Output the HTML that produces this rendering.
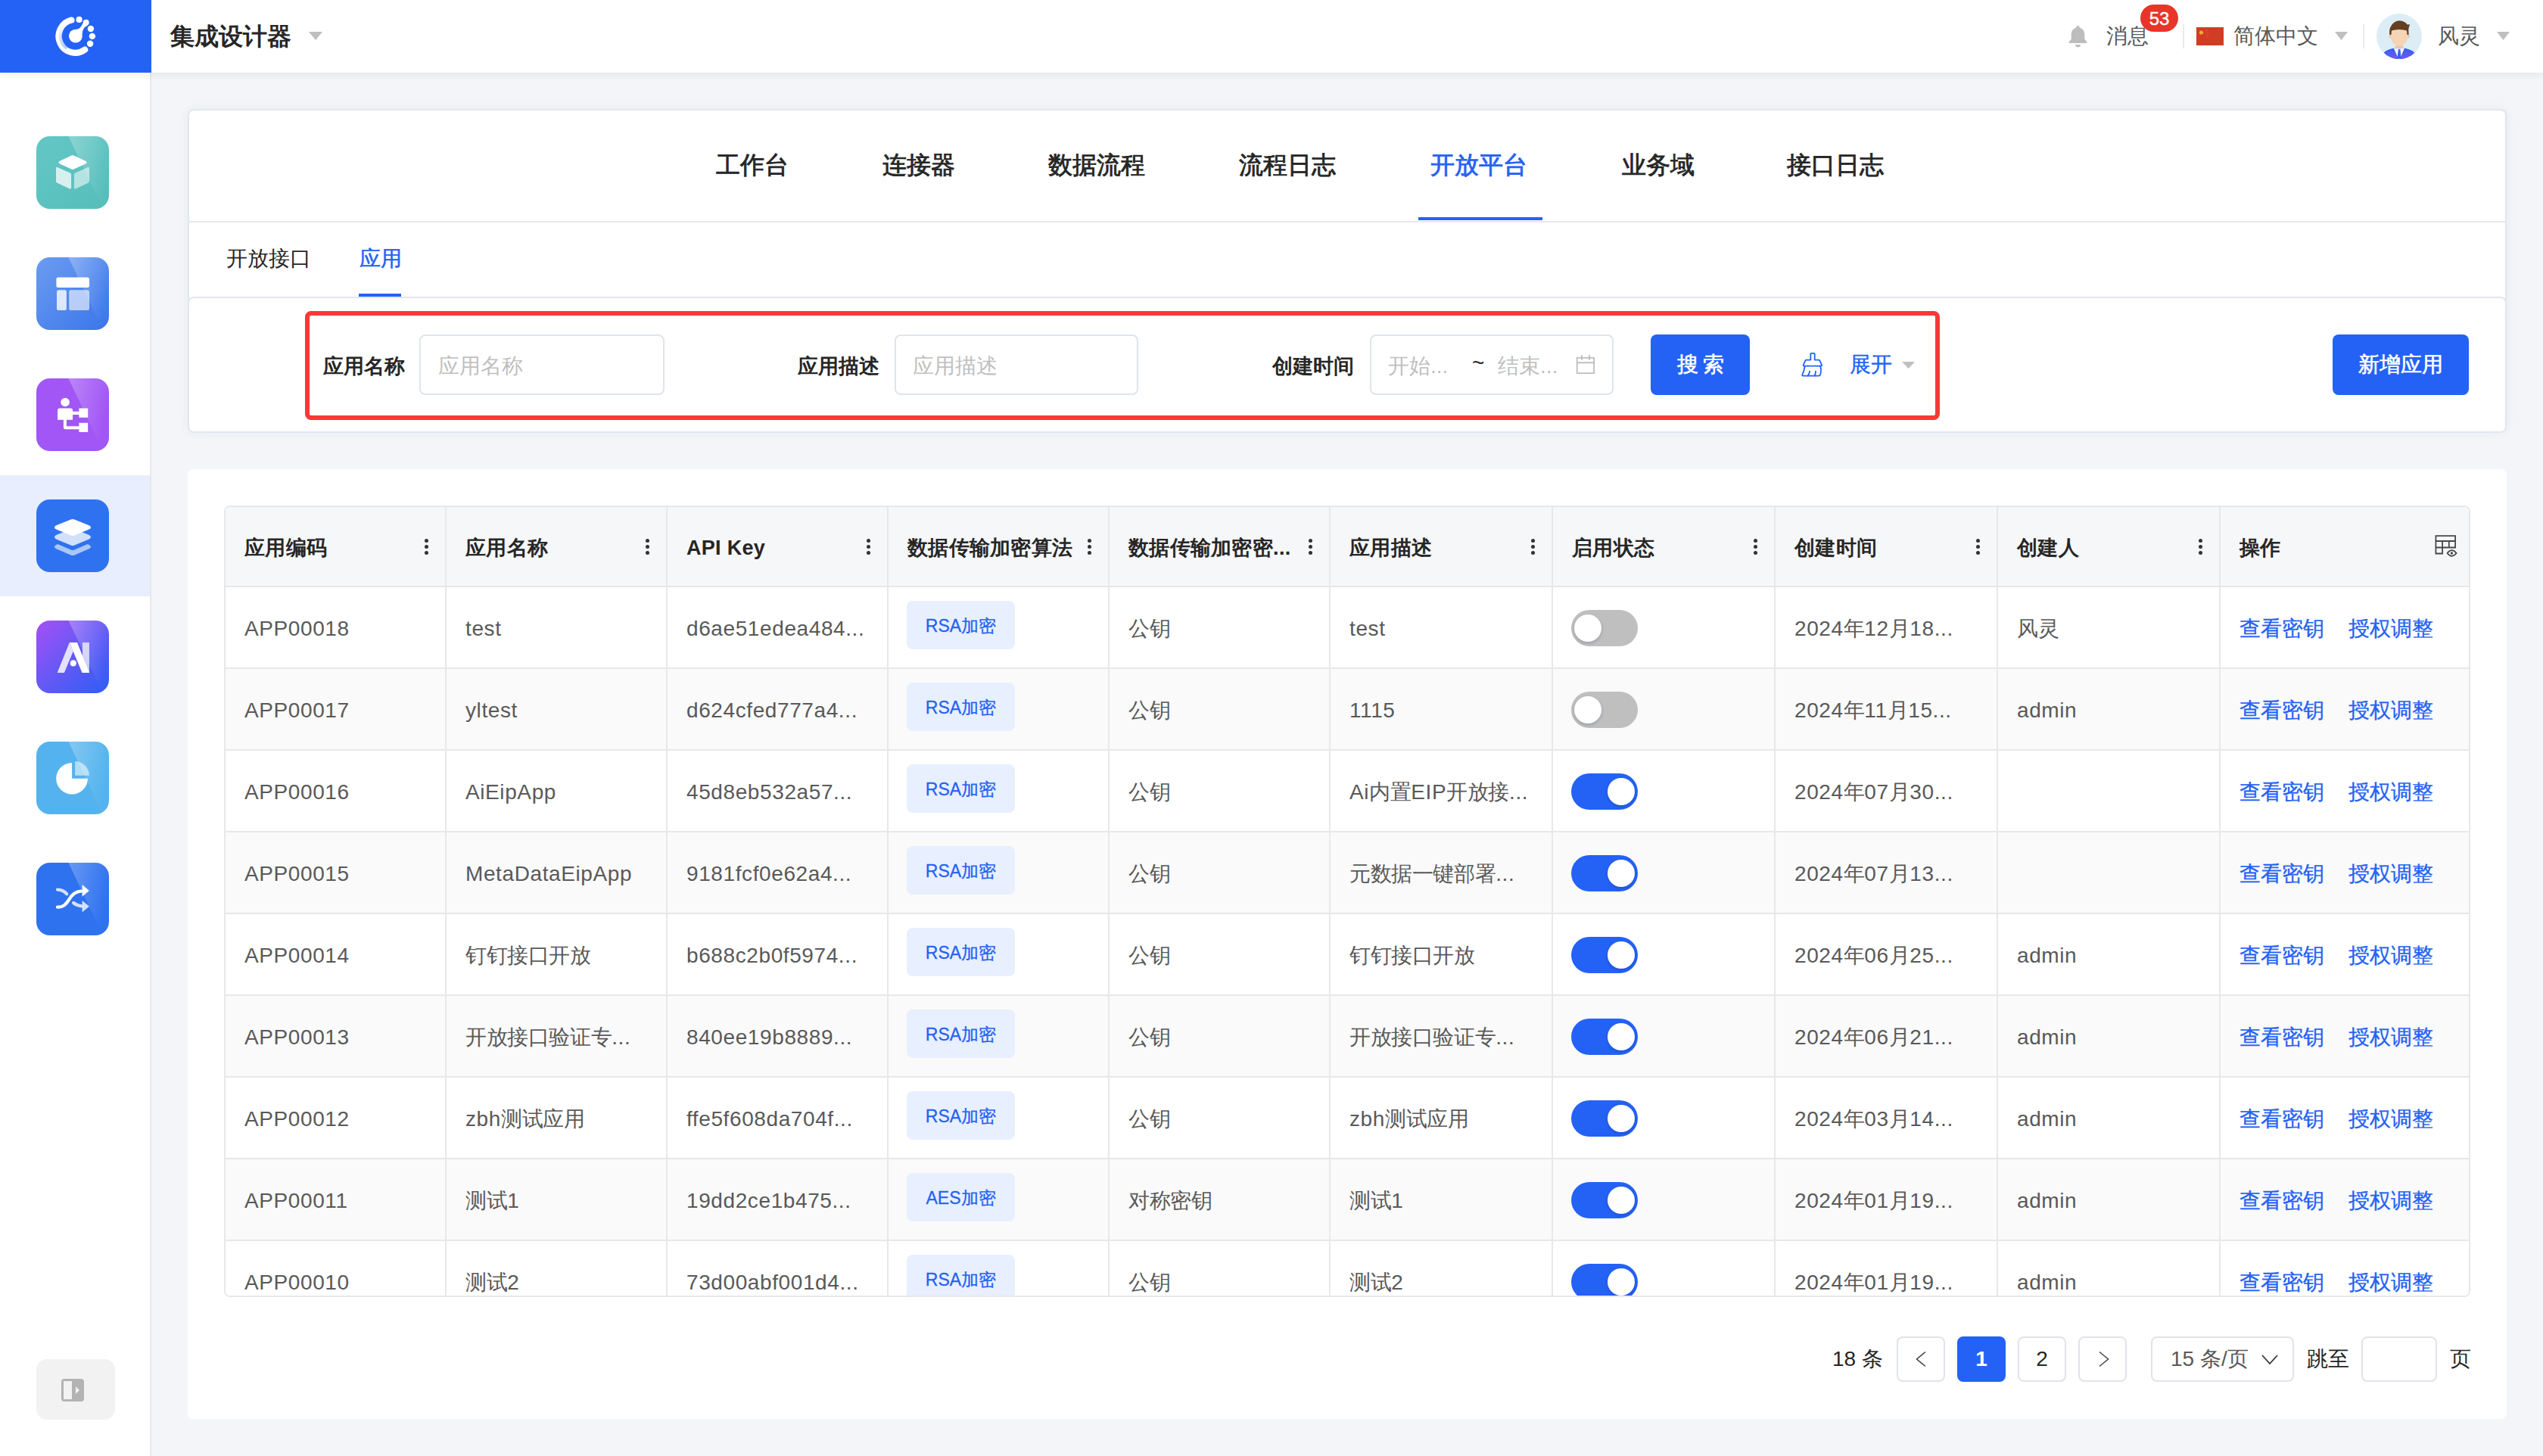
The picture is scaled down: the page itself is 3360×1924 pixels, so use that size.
<!DOCTYPE html>
<html><head><meta charset="utf-8">
<style>
*{box-sizing:border-box;margin:0;padding:0}
html,body{width:3360px;height:1924px;overflow:hidden}
body{position:relative;background:#F3F5F8;font-family:"Liberation Sans",sans-serif;color:#262626}
.a{position:absolute}
.t{position:absolute;white-space:nowrap;line-height:1}
#hdr{left:0;top:0;width:3360px;height:96px;background:#fff;box-shadow:0 3px 10px rgba(20,30,60,.07);z-index:5}
#side{left:0;top:96px;width:200px;height:1828px;background:#fff;border-right:2px solid #E6E8EC;z-index:4}
.sic{position:absolute;left:48px;width:96px;height:96px;border-radius:18px;overflow:hidden}
.card{position:absolute;background:#fff;border-radius:8px}
.tab{position:absolute;top:202px;font-size:32px;font-weight:400;-webkit-text-stroke:0.85px currentColor;color:#262626;line-height:32px;white-space:nowrap}
.lbl{position:absolute;top:470px;font-size:27px;font-weight:700;color:#262626;line-height:28px;white-space:nowrap}
.inp{position:absolute;top:442px;height:80px;border:2px solid #E0E4EC;border-radius:8px;background:#fff}
.ph{position:absolute;font-size:28px;color:#BFBFBF;line-height:28px;white-space:nowrap}
.btn{position:absolute;background:#2462F6;border-radius:8px;color:#fff;font-size:28px;line-height:28px;text-align:center}
.hc{position:absolute;top:0;height:106px}
.th{position:absolute;top:41px;font-size:27px;font-weight:700;color:#262626;line-height:27px;white-space:nowrap;letter-spacing:0.3px}
.td{position:absolute;font-size:28px;color:#595959;line-height:28px;white-space:nowrap;letter-spacing:0.6px}
.dots{position:absolute;width:6px;height:22px}
.dots i{position:absolute;left:0;width:5px;height:5px;border-radius:50%;background:#333}
.tag{position:absolute;width:143px;height:64px;border-radius:8px;background:#E8EFFE;color:#2462F6;font-size:23px;line-height:66px;-webkit-text-stroke:0.3px #2462F6;text-align:center;white-space:nowrap}
.sw{position:absolute;width:88px;height:48px;border-radius:24px}
.sw i{position:absolute;top:6px;width:36px;height:36px;border-radius:50%;background:#fff;box-shadow:0 2px 4px rgba(0,30,80,.2)}
.pg{position:absolute;top:1766px;height:60px;border:2px solid #E1E3EA;border-radius:8px;background:#fff;font-size:28px;line-height:56px;text-align:center;color:#262626}
</style></head>
<body>

<div id="hdr" class="a">
<div class="a" style="left:0;top:0;width:200px;height:96px;background:#2462F6"></div>
<svg class="a" style="left:60px;top:10px" width="80" height="80" viewBox="60 10 80 80">
<defs><linearGradient id="lg1" gradientUnits="userSpaceOnUse" x1="0" y1="30" x2="0" y2="64"><stop offset="0" stop-color="#A9C3F7" stop-opacity="0"/><stop offset="1" stop-color="#A9C3F7" stop-opacity=".9"/></linearGradient></defs>
<path d="M94.4 26.6 A21.9 21.9 0 1 0 112.2 65.7" fill="none" stroke="#fff" stroke-width="8.2" stroke-linecap="round"/>
<path d="M88.6 31.6 A19.6 19.6 0 0 0 88.5 64" fill="none" stroke="url(#lg1)" stroke-width="3.8"/>
<circle cx="99.9" cy="47.6" r="8.9" fill="#fff"/>
<path d="M100.5 38.7 Q106.5 38.5 109.6 30.2 L116 33.6 Q108.5 37 108.6 45.5 Z" fill="#fff"/>
<circle cx="113.7" cy="29.8" r="4" fill="#fff"/>
<circle cx="104.6" cy="25.9" r="4.1" fill="#fff"/>
<circle cx="119.9" cy="38" r="4.2" fill="#fff"/>
<circle cx="121.9" cy="47.9" r="4.2" fill="#fff"/>
<circle cx="119.1" cy="57.8" r="4.2" fill="#fff"/>
</svg>
<div class="t" style="left:225px;top:32px;font-size:32px;font-weight:600;color:#262626">集成设计器</div>
<svg class="a" style="left:408px;top:42px" width="18" height="11" viewBox="0 0 18 11"><path d="M0 0H18L9 11Z" fill="#BFBFBF"/></svg>
<svg class="a" style="left:2733px;top:33px" width="25" height="30" viewBox="0 0 25 30"><path d="M12.5 1c1.3 0 2 .8 2 1.8v.6c4.3 1 6.8 4.6 6.8 9.2v6.2l3 3.4v1.8H.7v-1.8l3-3.4v-6.2c0-4.6 2.5-8.2 6.8-9.2v-.6c0-1 .7-1.8 2-1.8z" fill="#BDBDBD"/><path d="M9 26h7c0 2-1.5 3.5-3.5 3.5S9 28 9 26z" fill="#BDBDBD"/></svg>
<div class="t" style="left:2783px;top:34px;font-size:28px;color:#595959">消息</div>
<div class="a" style="left:2828px;top:6px;width:50px;height:36px;border-radius:18px;background:#E8352A;color:#fff;font-size:24px;line-height:38px;text-align:center;-webkit-text-stroke:0.4px #fff">53</div>
<div class="a" style="left:2884px;top:32px;width:2px;height:32px;background:#EBEBEB"></div>
<svg class="a" style="left:2902px;top:36px" width="36" height="24" viewBox="0 0 36 24"><rect width="36" height="24" fill="#D23C25"/><circle cx="6.5" cy="7" r="2.6" fill="#F2BE3A" opacity=".85"/><path d="M13 3.5 Q17 8 13.5 13.5" stroke="#DD7A30" stroke-width="1.4" fill="none" stroke-dasharray="1.6 1.6" opacity=".6"/></svg>
<div class="t" style="left:2951px;top:34px;font-size:28px;color:#595959">简体中文</div>
<svg class="a" style="left:3085px;top:42px" width="17" height="11" viewBox="0 0 17 11"><path d="M0 0H17L8.5 11Z" fill="#BFBFBF"/></svg>
<div class="a" style="left:3122px;top:32px;width:2px;height:32px;background:#EBEBEB"></div>
<svg class="a" style="left:3140px;top:18px" width="60" height="60" viewBox="0 0 60 60">
<defs><clipPath id="avc"><circle cx="30" cy="30" r="30"/></clipPath>
<linearGradient id="suit" x1="0" y1="0" x2="0" y2="1"><stop offset="0" stop-color="#2E60F2"/><stop offset="1" stop-color="#7A55F2"/></linearGradient></defs>
<circle cx="30" cy="30" r="30" fill="#DDEDF6"/>
<g clip-path="url(#avc)">
<rect x="25" y="39" width="10" height="7" fill="#F0CBA8"/>
<path d="M9.8 51.5 Q14 47.5 22.4 45.8 L37.2 45.8 Q46 47.5 50.2 51.5 Q44 62 30 62 Q16 62 9.8 51.5 Z" fill="url(#suit)"/>
<path d="M22.6 45.8 L37.2 45.8 L31.2 59.5 L28.8 59.5 Z" fill="#F2F2F2"/>
<path d="M22.4 45.8 L29 60 L22 60 L15 50 Z" fill="url(#suit)"/>
<path d="M37.2 45.8 L31 60 L38 60 L45 50 Z" fill="url(#suit)"/>
<path d="M28.9 47.3 L31.3 47.3 L32.8 59.5 L27.4 59.5 Z" fill="#2F62F2"/>
<circle cx="30.1" cy="48" r="1.2" fill="#7B55F2"/>
<ellipse cx="17.9" cy="29.8" rx="1.9" ry="2.6" fill="#F2CDAA"/><ellipse cx="42.4" cy="29.8" rx="1.9" ry="2.6" fill="#F2CDAA"/>
<path d="M18.4 24 Q18.4 20.5 22 20.5 L38 20.5 Q41.6 20.5 41.4 24 L40.8 33 Q40 38 34.5 42.3 L25.5 42.3 Q20 38 19.1 33 Z" fill="#F5D5B5"/>
<path d="M17.3 28 Q16.5 20 19 17 Q23 9.3 30.5 9.3 Q37 9.5 40.8 14.6 L44.2 14.3 Q42.8 17.5 42.3 20.5 L42.6 28 L40.5 28 L40 22.5 Q36 21 30 21 Q24 21 20 22.5 L19.5 28 Z" fill="#653F22"/>
</g></svg>
<div class="t" style="left:3221px;top:34px;font-size:28px;color:#595959">风灵</div>
<svg class="a" style="left:3299px;top:42px" width="17" height="11" viewBox="0 0 17 11"><path d="M0 0H17L8.5 11Z" fill="#BFBFBF"/></svg>
</div>
<div id="side" class="a">
<div class="a" style="left:0;top:532px;width:198px;height:160px;background:#E8EEFD"></div>
<div class="sic" style="top:84px;background:linear-gradient(135deg,#62C7C5,#57BDBB)"><svg class="a" style="left:0;top:0" width="96" height="96" viewBox="0 0 96 96"><defs><linearGradient id="shg0" x1="0" y1="0" x2="1" y2="0.35"><stop offset="0" stop-color="#fff" stop-opacity=".28"/><stop offset="1" stop-color="#fff" stop-opacity="0"/></linearGradient></defs><path d="M42.5 0 L96 0 L96 96 L88 96 Z" fill="url(#shg0)"/><path d="M46.3 25.6 Q48 24.8 49.7 25.6 L65.5 33 Q67.6 34.6 65.5 36.2 L49.7 43.6 Q48 44.4 46.3 43.6 L30.5 36.2 Q28.4 34.6 30.5 33 Z" fill="#fff"/><path d="M27.8 41 L44.6 48.6 Q46.1 49.3 46.1 51 V67.9 Q46.1 70.2 44 69.4 L27.6 61.8 Q26 61 26 59.3 V42.6 Q26 40.2 27.8 41 Z" fill="#fff" fill-opacity=".75"/><path d="M68.2 41 L51.4 48.6 Q49.9 49.3 49.9 51 V67.9 Q49.9 70.2 52 69.4 L68.4 61.8 Q70 61 70 59.3 V42.6 Q70 40.2 68.2 41 Z" fill="#fff" fill-opacity=".55"/></svg></div>
<div class="sic" style="top:244px;background:linear-gradient(135deg,#6C9CF1,#3A76EA)"><svg class="a" style="left:0;top:0" width="96" height="96" viewBox="0 0 96 96"><defs><linearGradient id="shg1" x1="0" y1="0" x2="1" y2="0.35"><stop offset="0" stop-color="#fff" stop-opacity=".28"/><stop offset="1" stop-color="#fff" stop-opacity="0"/></linearGradient></defs><path d="M42.5 0 L96 0 L96 96 L88 96 Z" fill="url(#shg1)"/><rect x="26.4" y="26.4" width="43.6" height="13.5" rx="2.5" fill="#fff"/><rect x="27" y="43.2" width="12.9" height="26.8" rx="2.5" fill="#fff" fill-opacity=".8"/><rect x="43.2" y="43.2" width="26.8" height="26.8" rx="2.5" fill="#fff" fill-opacity=".6"/></svg></div>
<div class="sic" style="top:404px;background:#A156F5"><svg class="a" style="left:0;top:0" width="96" height="96" viewBox="0 0 96 96"><defs><linearGradient id="shg2" x1="0" y1="0" x2="1" y2="0.35"><stop offset="0" stop-color="#fff" stop-opacity=".28"/><stop offset="1" stop-color="#fff" stop-opacity="0"/></linearGradient></defs><path d="M42.5 0 L96 0 L96 96 L88 96 Z" fill="url(#shg2)"/><circle cx="38.1" cy="31.5" r="5.8" fill="#fff"/><path d="M31 39.6 H45.1 Q48.1 39.6 48.1 42.6 V43.8 H56.4 V39.6 H68.2 V51.7 H56.4 V48.1 H48.1 V54.7 H39.9 V63.3 H56.4 V58.7 H68.2 V70.9 H56.4 V67.2 H38.4 Q35.9 67.2 35.9 64.7 V54.7 H28 V42.6 Q28 39.6 31 39.6 Z" fill="#fff"/></svg></div>
<div class="sic" style="top:564px;background:#2F72F0"><svg class="a" style="left:0;top:0" width="96" height="96" viewBox="0 0 96 96"><path d="M48 74 Q46.8 74 45.6 73.5 L26.3 65.3 Q24 64.2 24 62.6 Q24 61 26.3 59.9 L28.3 59 L45.6 66.4 Q48 67.4 50.4 66.4 L67.7 59 L69.7 59.9 Q72 61 72 62.6 Q72 64.2 69.7 65.3 L50.4 73.5 Q49.2 74 48 74 Z" fill="#fff" fill-opacity=".6"/><path d="M26.3 47.1 L45.6 39 Q48 38 50.4 39 L69.7 47.1 Q72 48.2 72 49.8 Q72 51.4 69.7 52.5 L50.4 60.6 Q48 61.6 45.6 60.6 L26.3 52.5 Q24 51.4 24 49.8 Q24 48.2 26.3 47.1 Z" fill="#fff" fill-opacity=".78"/><path d="M26.3 34.3 L45.6 26.4 Q48 25.4 50.4 26.4 L69.7 34.3 Q72 35.4 72 36.9 Q72 38.4 69.7 39.5 L50.4 47.4 Q48 48.4 45.6 47.4 L26.3 39.5 Q24 38.4 24 36.9 Q24 35.4 26.3 34.3 Z" fill="#fff"/></svg></div>
<div class="sic" style="top:724px;background:linear-gradient(135deg,#A64FF6 0%,#6A58F5 45%,#2E5DF4 100%)"><svg class="a" style="left:0;top:0" width="96" height="96" viewBox="0 0 96 96"><defs><linearGradient id="shg4" x1="0" y1="0" x2="1" y2="0.35"><stop offset="0" stop-color="#fff" stop-opacity=".28"/><stop offset="1" stop-color="#fff" stop-opacity="0"/></linearGradient></defs><path d="M42.5 0 L96 0 L96 96 L88 96 Z" fill="url(#shg4)"/><path d="M27.7 68.9 L43.8 29 L48.7 40.8 L36.9 68.9 Z" fill="#fff" fill-opacity=".82"/><rect x="61" y="29" width="8.9" height="39.9" fill="#fff" fill-opacity=".72"/><path d="M43.8 29 L54 29 L70 68.9 L60.5 68.9 Z" fill="#fff"/><circle cx="48.8" cy="56.4" r="4.1" fill="#fff"/></svg></div>
<div class="sic" style="top:884px;background:#54B3EE"><svg class="a" style="left:0;top:0" width="96" height="96" viewBox="0 0 96 96"><defs><linearGradient id="shg5" x1="0" y1="0" x2="1" y2="0.35"><stop offset="0" stop-color="#fff" stop-opacity=".28"/><stop offset="1" stop-color="#fff" stop-opacity="0"/></linearGradient></defs><path d="M42.5 0 L96 0 L96 96 L88 96 Z" fill="url(#shg5)"/><path d="M47.1 27.9 A20.9 20.9 0 1 0 68 48.8 H47.1 Z" fill="#fff"/><path d="M51.1 26 A18.8 18.8 0 0 1 69.9 44.8 H51.1 Z" fill="#fff" fill-opacity=".55"/></svg></div>
<div class="sic" style="top:1044px;background:#2F72F0"><svg class="a" style="left:0;top:0" width="96" height="96" viewBox="0 0 96 96"><defs><linearGradient id="shg6" x1="0" y1="0" x2="1" y2="0.35"><stop offset="0" stop-color="#fff" stop-opacity=".28"/><stop offset="1" stop-color="#fff" stop-opacity="0"/></linearGradient></defs><path d="M42.5 0 L96 0 L96 96 L88 96 Z" fill="url(#shg6)"/><path d="M28 35.6 Q35 35.6 40.2 41.3" stroke="#fff" stroke-opacity=".78" stroke-width="4.3" fill="none" stroke-linecap="round"/><path d="M28 58.7 C36 58.7 39 55 43 49 C47 42 52 38 59 37.6" stroke="#fff" stroke-width="4.3" fill="none" stroke-linecap="round"/><path d="M60.6 29 L69.9 36.9 L60.6 44.8 Z" fill="#fff"/><path d="M49.1 53 Q53 56.3 59.5 57.3" stroke="#fff" stroke-opacity=".78" stroke-width="4.3" fill="none" stroke-linecap="round"/><path d="M60.6 50 L69.9 57.7 L60.6 65.6 Z" fill="#fff" fill-opacity=".78"/></svg></div>
<div class="a" style="left:48px;top:1700px;width:104px;height:80px;border-radius:14px;background:#F2F2F2"></div>
<svg class="a" style="left:80px;top:1725px" width="32" height="32" viewBox="0 0 32 32"><rect x="1" y="1" width="30" height="30" rx="4" fill="#B3B3B3"/><rect x="4" y="4" width="11" height="24" fill="#F2F2F2"/><path d="M20 11 L25 16 L20 21 Z" fill="#F2F2F2"/></svg>
</div>
<div class="card" style="left:248px;top:144px;width:3064px;height:428px;border:2px solid #E2E6ED;box-shadow:0 0 14px rgba(30,50,90,.05)"></div>
<div class="tab" style="left:946px;color:#262626">工作台</div>
<div class="tab" style="left:1166px;color:#262626">连接器</div>
<div class="tab" style="left:1385px;color:#262626">数据流程</div>
<div class="tab" style="left:1637px;color:#262626">流程日志</div>
<div class="tab" style="left:1890px;color:#2462F6">开放平台</div>
<div class="tab" style="left:2143px;color:#262626">业务域</div>
<div class="tab" style="left:2361px;color:#262626">接口日志</div>
<div class="a" style="left:1874px;top:287px;width:164px;height:4px;background:#2462F6"></div>
<div class="a" style="left:248px;top:292px;width:3063px;height:2px;background:#E6E8EE"></div>
<div class="t" style="left:299px;top:328px;font-size:28px;color:#262626">开放接口</div>
<div class="t" style="left:475px;top:328px;font-size:28px;-webkit-text-stroke:0.5px #2462F6;color:#2462F6">应用</div>
<div class="a" style="left:474px;top:388px;width:56px;height:4px;background:#2462F6"></div>
<div class="a" style="left:248px;top:392px;width:3064px;height:24px;border-top:2px solid #E3E6EE;border-left:2px solid #E3E6EE;border-right:2px solid #E3E6EE;border-radius:8px 8px 0 0;-webkit-mask-image:linear-gradient(#000 30%,transparent 100%)"></div>
<div class="a" style="left:403px;top:411px;width:2160px;height:144px;border:6px solid #F93838;border-radius:8px"></div>
<div class="lbl" style="left:427px">应用名称</div>
<div class="inp" style="left:554px;width:324px"></div><div class="ph" style="left:579px;top:470px">应用名称</div>
<div class="lbl" style="left:1054px">应用描述</div>
<div class="inp" style="left:1182px;width:322px"></div><div class="ph" style="left:1206px;top:470px">应用描述</div>
<div class="lbl" style="left:1681px">创建时间</div>
<div class="inp" style="left:1810px;width:322px"></div>
<div class="ph" style="left:1834px;top:470px">开始...</div>
<div class="t" style="left:1945px;top:466px;font-size:28px;color:#262626">~</div>
<div class="ph" style="left:1979px;top:470px">结束...</div>
<svg class="a" style="left:2070px;top:460px" width="50" height="45" viewBox="0 0 50 45"><path d="M13.7 12.9H36.1V33.1H13.7Z M13.7 19.2H36.1 M20 9.3V15.8 M30 9.3V15.8" fill="none" stroke="#BFBFBF" stroke-width="1.9"/></svg>
<div class="btn" style="left:2181px;top:442px;width:131px;height:80px;line-height:80px;-webkit-text-stroke:0.6px #fff;letter-spacing:6px;padding-left:6px">搜索</div>
<svg class="a" style="left:2370px;top:455px" width="50" height="50" viewBox="0 0 50 50"><g fill="none" stroke="#2462F6" stroke-width="1.8" stroke-linejoin="round" stroke-linecap="round"><path d="M22.3 20.6V12.6Q22.3 11.9 23 11.9H27Q27.7 11.9 27.7 12.6V20.6H33Q33.9 20.6 34.3 21.4L37 27.4Q37.4 28.6 36.1 28.6H13.6Q12.3 28.6 12.7 27.4L15.4 21.4Q15.8 20.6 16.7 20.6Z"/><path d="M14.6 28.6Q14.2 34.5 11.3 40.3Q10.8 41.6 12.2 41.6H33Q34.8 41.6 35.3 39.5Q37 33 34.9 28.6"/><path d="M21.1 35.6Q20.7 39 18.6 41.6"/><path d="M29 35.6Q29 39 27.7 41.6"/></g></svg>
<div class="t" style="left:2444px;top:468px;font-size:28px;color:#2462F6;-webkit-text-stroke:0.4px #2462F6">展开</div>
<svg class="a" style="left:2513px;top:478px" width="17" height="9" viewBox="0 0 17 9"><path d="M0 0H17L8.5 9Z" fill="#BFBFBF"/></svg>
<div class="btn" style="left:3082px;top:442px;width:180px;height:80px;line-height:80px;-webkit-text-stroke:0.6px #fff">新增应用</div>
<div class="card" style="left:248px;top:620px;width:3064px;height:1255px"></div>
<div class="a" style="left:296px;top:668px;width:2968px;height:1046px;border:2px solid #E6E8EB;border-radius:8px;overflow:hidden;background:#fff">
<div class="a" style="left:0;top:0;width:100%;height:104px;background:#F6F7F9"></div>
<div class="a" style="left:0;top:104px;width:100%;height:108px;background:#fff"></div>
<div class="a" style="left:0;top:104px;width:100%;height:2px;background:#E8E8E8"></div>
<div class="a" style="left:0;top:212px;width:100%;height:108px;background:#FAFAFA"></div>
<div class="a" style="left:0;top:212px;width:100%;height:2px;background:#E8E8E8"></div>
<div class="a" style="left:0;top:320px;width:100%;height:108px;background:#fff"></div>
<div class="a" style="left:0;top:320px;width:100%;height:2px;background:#E8E8E8"></div>
<div class="a" style="left:0;top:428px;width:100%;height:108px;background:#FAFAFA"></div>
<div class="a" style="left:0;top:428px;width:100%;height:2px;background:#E8E8E8"></div>
<div class="a" style="left:0;top:536px;width:100%;height:108px;background:#fff"></div>
<div class="a" style="left:0;top:536px;width:100%;height:2px;background:#E8E8E8"></div>
<div class="a" style="left:0;top:644px;width:100%;height:108px;background:#FAFAFA"></div>
<div class="a" style="left:0;top:644px;width:100%;height:2px;background:#E8E8E8"></div>
<div class="a" style="left:0;top:752px;width:100%;height:108px;background:#fff"></div>
<div class="a" style="left:0;top:752px;width:100%;height:2px;background:#E8E8E8"></div>
<div class="a" style="left:0;top:860px;width:100%;height:108px;background:#FAFAFA"></div>
<div class="a" style="left:0;top:860px;width:100%;height:2px;background:#E8E8E8"></div>
<div class="a" style="left:0;top:968px;width:100%;height:108px;background:#fff"></div>
<div class="a" style="left:0;top:968px;width:100%;height:2px;background:#E8E8E8"></div>
<div class="a" style="left:290px;top:0;width:2px;height:2000px;background:#E8E8E8"></div>
<div class="a" style="left:582px;top:0;width:2px;height:2000px;background:#E8E8E8"></div>
<div class="a" style="left:874px;top:0;width:2px;height:2000px;background:#E8E8E8"></div>
<div class="a" style="left:1166px;top:0;width:2px;height:2000px;background:#E8E8E8"></div>
<div class="a" style="left:1458px;top:0;width:2px;height:2000px;background:#E8E8E8"></div>
<div class="a" style="left:1752px;top:0;width:2px;height:2000px;background:#E8E8E8"></div>
<div class="a" style="left:2046px;top:0;width:2px;height:2000px;background:#E8E8E8"></div>
<div class="a" style="left:2340px;top:0;width:2px;height:2000px;background:#E8E8E8"></div>
<div class="a" style="left:2634px;top:0;width:2px;height:2000px;background:#E8E8E8"></div>
<div class="th" style="left:25.0px">应用编码</div>
<div class="dots" style="left:263.0px;top:42px"><i style="top:0"></i><i style="top:8px"></i><i style="top:16px"></i></div>
<div class="th" style="left:317.0px">应用名称</div>
<div class="dots" style="left:555.0px;top:42px"><i style="top:0"></i><i style="top:8px"></i><i style="top:16px"></i></div>
<div class="th" style="left:609.0px">API Key</div>
<div class="dots" style="left:847.0px;top:42px"><i style="top:0"></i><i style="top:8px"></i><i style="top:16px"></i></div>
<div class="th" style="left:901.0px">数据传输加密算法</div>
<div class="dots" style="left:1139.0px;top:42px"><i style="top:0"></i><i style="top:8px"></i><i style="top:16px"></i></div>
<div class="th" style="left:1193.0px">数据传输加密密...</div>
<div class="dots" style="left:1431.0px;top:42px"><i style="top:0"></i><i style="top:8px"></i><i style="top:16px"></i></div>
<div class="th" style="left:1485.0px">应用描述</div>
<div class="dots" style="left:1725.0px;top:42px"><i style="top:0"></i><i style="top:8px"></i><i style="top:16px"></i></div>
<div class="th" style="left:1779.0px">启用状态</div>
<div class="dots" style="left:2019.0px;top:42px"><i style="top:0"></i><i style="top:8px"></i><i style="top:16px"></i></div>
<div class="th" style="left:2073.0px">创建时间</div>
<div class="dots" style="left:2313.0px;top:42px"><i style="top:0"></i><i style="top:8px"></i><i style="top:16px"></i></div>
<div class="th" style="left:2367.0px">创建人</div>
<div class="dots" style="left:2607.0px;top:42px"><i style="top:0"></i><i style="top:8px"></i><i style="top:16px"></i></div>
<div class="th" style="left:2661.0px">操作</div>
<svg class="a" style="left:2907px;top:25px" width="55" height="55" viewBox="0 0 55 55"><g fill="none" stroke="#474747" stroke-width="1.8"><path d="M13.4 13.2H39.1V28.5H22.1V36.5H13.4Z M13.4 20H39.1 M13.4 28.5H22.1 M22.1 20V28.5 M30.8 20V28.5"/><path d="M28.6 36Q34.4 28.4 40.6 36Q34.4 43.6 28.6 36Z" fill="#F6F7F9"/></g><circle cx="34.4" cy="36" r="1.7" fill="#474747"/></svg>
<div class="td" style="left:25.0px;top:147px">APP00018</div>
<div class="td" style="left:317.0px;top:147px">test</div>
<div class="td" style="left:609.0px;top:147px">d6ae51edea484...</div>
<div class="td" style="left:1193.0px;top:147px"><span style="letter-spacing:-0.4px">公钥</span></div>
<div class="td" style="left:1485.0px;top:147px">test</div>
<div class="td" style="left:2073.0px;top:147px">2024<span style="letter-spacing:-0.4px">年</span>12<span style="letter-spacing:-0.4px">月</span>18...</div>
<div class="td" style="left:2367.0px;top:147px"><span style="letter-spacing:-0.4px">风灵</span></div>
<div class="tag" style="left:900.0px;top:124px">RSA加密</div>
<div class="sw" style="left:1778.0px;top:136px;background:#BFBFBF"><i style="left:4px"></i></div>
<div class="td" style="left:2661px;top:147px;color:#2462F6;letter-spacing:0;-webkit-text-stroke:0.3px #2462F6">查看密钥</div>
<div class="td" style="left:2805px;top:147px;color:#2462F6;letter-spacing:0;-webkit-text-stroke:0.3px #2462F6">授权调整</div>
<div class="td" style="left:25.0px;top:255px">APP00017</div>
<div class="td" style="left:317.0px;top:255px">yltest</div>
<div class="td" style="left:609.0px;top:255px">d624cfed777a4...</div>
<div class="td" style="left:1193.0px;top:255px"><span style="letter-spacing:-0.4px">公钥</span></div>
<div class="td" style="left:1485.0px;top:255px">1115</div>
<div class="td" style="left:2073.0px;top:255px">2024<span style="letter-spacing:-0.4px">年</span>11<span style="letter-spacing:-0.4px">月</span>15...</div>
<div class="td" style="left:2367.0px;top:255px">admin</div>
<div class="tag" style="left:900.0px;top:232px">RSA加密</div>
<div class="sw" style="left:1778.0px;top:244px;background:#BFBFBF"><i style="left:4px"></i></div>
<div class="td" style="left:2661px;top:255px;color:#2462F6;letter-spacing:0;-webkit-text-stroke:0.3px #2462F6">查看密钥</div>
<div class="td" style="left:2805px;top:255px;color:#2462F6;letter-spacing:0;-webkit-text-stroke:0.3px #2462F6">授权调整</div>
<div class="td" style="left:25.0px;top:363px">APP00016</div>
<div class="td" style="left:317.0px;top:363px">AiEipApp</div>
<div class="td" style="left:609.0px;top:363px">45d8eb532a57...</div>
<div class="td" style="left:1193.0px;top:363px"><span style="letter-spacing:-0.4px">公钥</span></div>
<div class="td" style="left:1485.0px;top:363px">Ai<span style="letter-spacing:-0.4px">内置</span>EIP<span style="letter-spacing:-0.4px">开放接</span>...</div>
<div class="td" style="left:2073.0px;top:363px">2024<span style="letter-spacing:-0.4px">年</span>07<span style="letter-spacing:-0.4px">月</span>30...</div>
<div class="tag" style="left:900.0px;top:340px">RSA加密</div>
<div class="sw" style="left:1778.0px;top:352px;background:#2462F6"><i style="left:48px"></i></div>
<div class="td" style="left:2661px;top:363px;color:#2462F6;letter-spacing:0;-webkit-text-stroke:0.3px #2462F6">查看密钥</div>
<div class="td" style="left:2805px;top:363px;color:#2462F6;letter-spacing:0;-webkit-text-stroke:0.3px #2462F6">授权调整</div>
<div class="td" style="left:25.0px;top:471px">APP00015</div>
<div class="td" style="left:317.0px;top:471px">MetaDataEipApp</div>
<div class="td" style="left:609.0px;top:471px">9181fcf0e62a4...</div>
<div class="td" style="left:1193.0px;top:471px"><span style="letter-spacing:-0.4px">公钥</span></div>
<div class="td" style="left:1485.0px;top:471px"><span style="letter-spacing:-0.4px">元数据一键部署</span>...</div>
<div class="td" style="left:2073.0px;top:471px">2024<span style="letter-spacing:-0.4px">年</span>07<span style="letter-spacing:-0.4px">月</span>13...</div>
<div class="tag" style="left:900.0px;top:448px">RSA加密</div>
<div class="sw" style="left:1778.0px;top:460px;background:#2462F6"><i style="left:48px"></i></div>
<div class="td" style="left:2661px;top:471px;color:#2462F6;letter-spacing:0;-webkit-text-stroke:0.3px #2462F6">查看密钥</div>
<div class="td" style="left:2805px;top:471px;color:#2462F6;letter-spacing:0;-webkit-text-stroke:0.3px #2462F6">授权调整</div>
<div class="td" style="left:25.0px;top:579px">APP00014</div>
<div class="td" style="left:317.0px;top:579px"><span style="letter-spacing:-0.4px">钉钉接口开放</span></div>
<div class="td" style="left:609.0px;top:579px">b688c2b0f5974...</div>
<div class="td" style="left:1193.0px;top:579px"><span style="letter-spacing:-0.4px">公钥</span></div>
<div class="td" style="left:1485.0px;top:579px"><span style="letter-spacing:-0.4px">钉钉接口开放</span></div>
<div class="td" style="left:2073.0px;top:579px">2024<span style="letter-spacing:-0.4px">年</span>06<span style="letter-spacing:-0.4px">月</span>25...</div>
<div class="td" style="left:2367.0px;top:579px">admin</div>
<div class="tag" style="left:900.0px;top:556px">RSA加密</div>
<div class="sw" style="left:1778.0px;top:568px;background:#2462F6"><i style="left:48px"></i></div>
<div class="td" style="left:2661px;top:579px;color:#2462F6;letter-spacing:0;-webkit-text-stroke:0.3px #2462F6">查看密钥</div>
<div class="td" style="left:2805px;top:579px;color:#2462F6;letter-spacing:0;-webkit-text-stroke:0.3px #2462F6">授权调整</div>
<div class="td" style="left:25.0px;top:687px">APP00013</div>
<div class="td" style="left:317.0px;top:687px"><span style="letter-spacing:-0.4px">开放接口验证专</span>...</div>
<div class="td" style="left:609.0px;top:687px">840ee19b8889...</div>
<div class="td" style="left:1193.0px;top:687px"><span style="letter-spacing:-0.4px">公钥</span></div>
<div class="td" style="left:1485.0px;top:687px"><span style="letter-spacing:-0.4px">开放接口验证专</span>...</div>
<div class="td" style="left:2073.0px;top:687px">2024<span style="letter-spacing:-0.4px">年</span>06<span style="letter-spacing:-0.4px">月</span>21...</div>
<div class="td" style="left:2367.0px;top:687px">admin</div>
<div class="tag" style="left:900.0px;top:664px">RSA加密</div>
<div class="sw" style="left:1778.0px;top:676px;background:#2462F6"><i style="left:48px"></i></div>
<div class="td" style="left:2661px;top:687px;color:#2462F6;letter-spacing:0;-webkit-text-stroke:0.3px #2462F6">查看密钥</div>
<div class="td" style="left:2805px;top:687px;color:#2462F6;letter-spacing:0;-webkit-text-stroke:0.3px #2462F6">授权调整</div>
<div class="td" style="left:25.0px;top:795px">APP00012</div>
<div class="td" style="left:317.0px;top:795px">zbh<span style="letter-spacing:-0.4px">测试应用</span></div>
<div class="td" style="left:609.0px;top:795px">ffe5f608da704f...</div>
<div class="td" style="left:1193.0px;top:795px"><span style="letter-spacing:-0.4px">公钥</span></div>
<div class="td" style="left:1485.0px;top:795px">zbh<span style="letter-spacing:-0.4px">测试应用</span></div>
<div class="td" style="left:2073.0px;top:795px">2024<span style="letter-spacing:-0.4px">年</span>03<span style="letter-spacing:-0.4px">月</span>14...</div>
<div class="td" style="left:2367.0px;top:795px">admin</div>
<div class="tag" style="left:900.0px;top:772px">RSA加密</div>
<div class="sw" style="left:1778.0px;top:784px;background:#2462F6"><i style="left:48px"></i></div>
<div class="td" style="left:2661px;top:795px;color:#2462F6;letter-spacing:0;-webkit-text-stroke:0.3px #2462F6">查看密钥</div>
<div class="td" style="left:2805px;top:795px;color:#2462F6;letter-spacing:0;-webkit-text-stroke:0.3px #2462F6">授权调整</div>
<div class="td" style="left:25.0px;top:903px">APP00011</div>
<div class="td" style="left:317.0px;top:903px"><span style="letter-spacing:-0.4px">测试</span>1</div>
<div class="td" style="left:609.0px;top:903px">19dd2ce1b475...</div>
<div class="td" style="left:1193.0px;top:903px"><span style="letter-spacing:-0.4px">对称密钥</span></div>
<div class="td" style="left:1485.0px;top:903px"><span style="letter-spacing:-0.4px">测试</span>1</div>
<div class="td" style="left:2073.0px;top:903px">2024<span style="letter-spacing:-0.4px">年</span>01<span style="letter-spacing:-0.4px">月</span>19...</div>
<div class="td" style="left:2367.0px;top:903px">admin</div>
<div class="tag" style="left:900.0px;top:880px">AES加密</div>
<div class="sw" style="left:1778.0px;top:892px;background:#2462F6"><i style="left:48px"></i></div>
<div class="td" style="left:2661px;top:903px;color:#2462F6;letter-spacing:0;-webkit-text-stroke:0.3px #2462F6">查看密钥</div>
<div class="td" style="left:2805px;top:903px;color:#2462F6;letter-spacing:0;-webkit-text-stroke:0.3px #2462F6">授权调整</div>
<div class="td" style="left:25.0px;top:1011px">APP00010</div>
<div class="td" style="left:317.0px;top:1011px"><span style="letter-spacing:-0.4px">测试</span>2</div>
<div class="td" style="left:609.0px;top:1011px">73d00abf001d4...</div>
<div class="td" style="left:1193.0px;top:1011px"><span style="letter-spacing:-0.4px">公钥</span></div>
<div class="td" style="left:1485.0px;top:1011px"><span style="letter-spacing:-0.4px">测试</span>2</div>
<div class="td" style="left:2073.0px;top:1011px">2024<span style="letter-spacing:-0.4px">年</span>01<span style="letter-spacing:-0.4px">月</span>19...</div>
<div class="td" style="left:2367.0px;top:1011px">admin</div>
<div class="tag" style="left:900.0px;top:988px">RSA加密</div>
<div class="sw" style="left:1778.0px;top:1000px;background:#2462F6"><i style="left:48px"></i></div>
<div class="td" style="left:2661px;top:1011px;color:#2462F6;letter-spacing:0;-webkit-text-stroke:0.3px #2462F6">查看密钥</div>
<div class="td" style="left:2805px;top:1011px;color:#2462F6;letter-spacing:0;-webkit-text-stroke:0.3px #2462F6">授权调整</div>
</div>
<div class="t" style="left:2421px;top:1782px;font-size:28px;color:#262626">18 条</div>
<div class="pg" style="left:2506px;width:64px"><svg style="position:absolute;left:22px;top:17px" width="16" height="22" viewBox="0 0 16 22"><path d="M14 1.5 L2.5 11 L14 20.5" fill="none" stroke="#4A4A4A" stroke-width="1.6"/></svg></div>
<div class="pg" style="left:2586px;width:64px;background:#2462F6;border-color:#2462F6;color:#fff;font-weight:700">1</div>
<div class="pg" style="left:2666px;width:64px">2</div>
<div class="pg" style="left:2746px;width:64px"><svg style="position:absolute;left:24px;top:17px" width="16" height="22" viewBox="0 0 16 22"><path d="M2 1.5 L13.5 11 L2 20.5" fill="none" stroke="#4A4A4A" stroke-width="1.6"/></svg></div>
<div class="pg" style="left:2842px;width:189px;text-align:left;padding-left:24px;color:#595959">15 条/页<svg style="position:absolute;left:144px;top:22px" width="22" height="14" viewBox="0 0 22 14"><path d="M1 1 L11 12 L21 1" fill="none" stroke="#333" stroke-width="1.8"/></svg></div>
<div class="t" style="left:3048px;top:1782px;font-size:28px;color:#262626">跳至</div>
<div class="pg" style="left:3120px;width:100px"></div>
<div class="t" style="left:3237px;top:1782px;font-size:28px;color:#262626">页</div>
</body></html>
